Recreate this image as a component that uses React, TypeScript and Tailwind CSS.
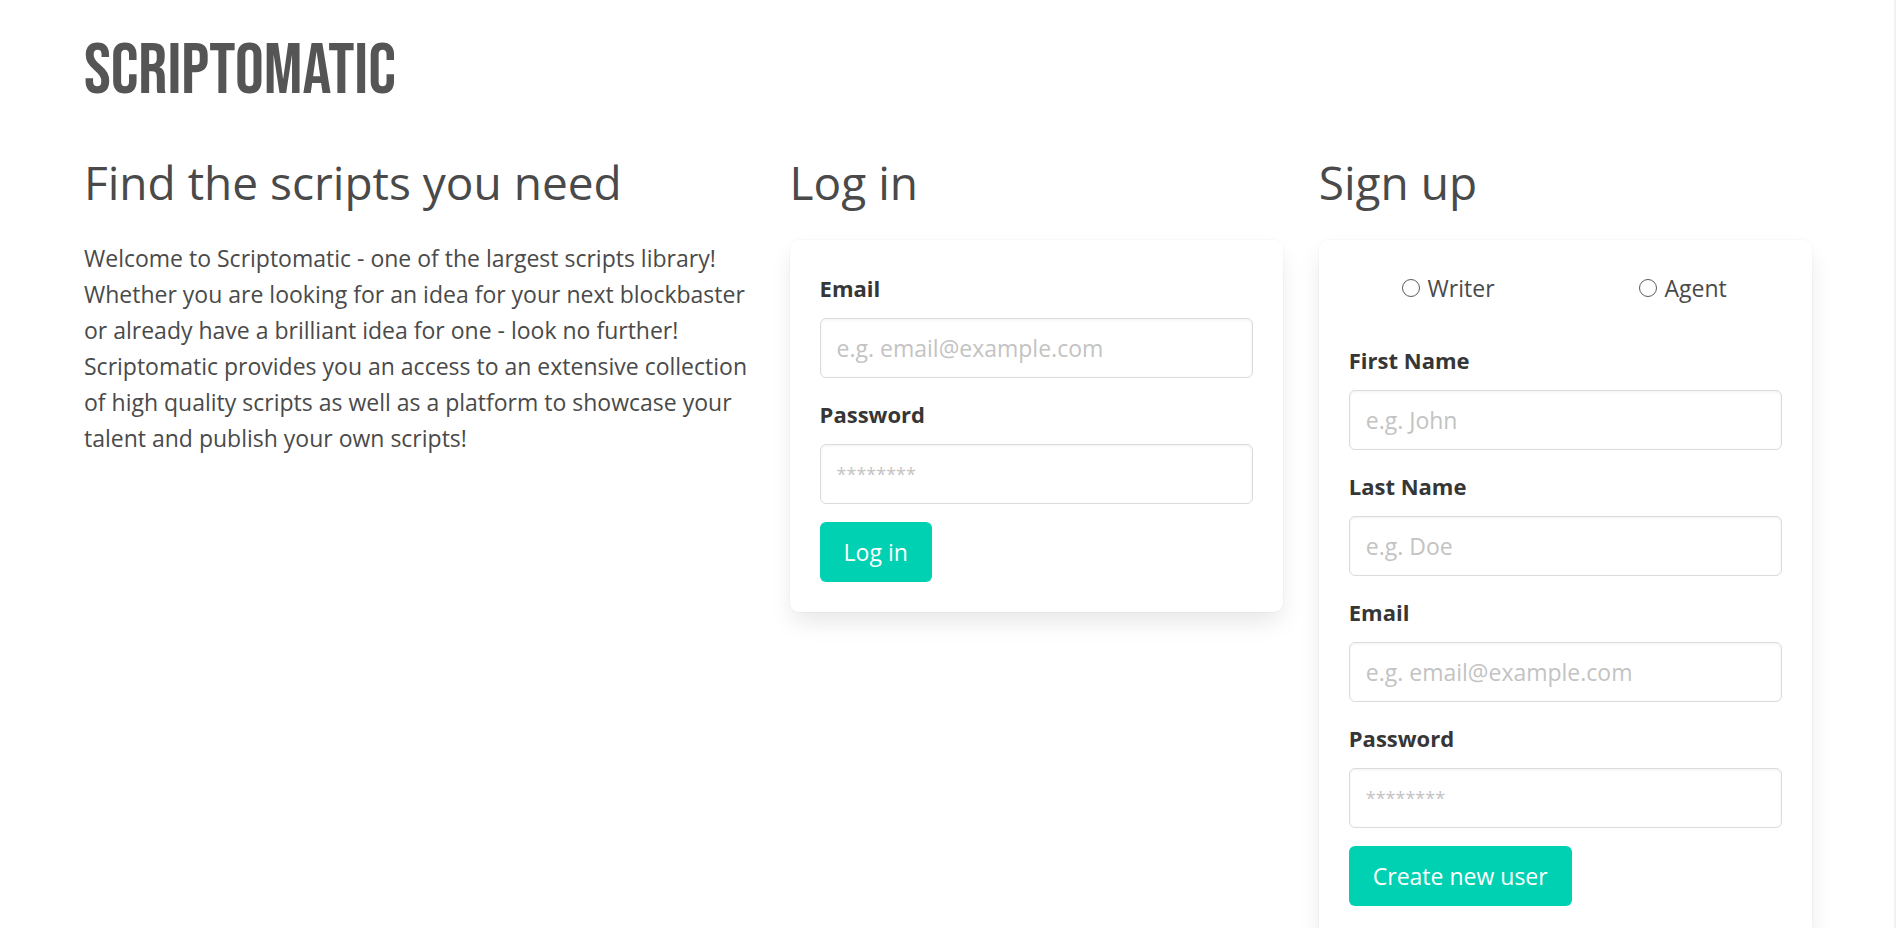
import { useId } from "react";
import type { ReactNode } from "react";

type FieldProps = {
  label: string;
  type: string;
  placeholder: string;
};

function Field({ label, type, placeholder }: FieldProps) {
  const id = useId();
  return (
    <div>
      <label
        htmlFor={id}
        className="mb-3 block text-[22px] leading-[36px] font-bold text-[#363636]"
      >
        {label}
      </label>
      <input
        id={id}
        type={type}
        placeholder={placeholder}
        className="block h-[60px] w-full rounded-md border border-[#dbdbdb] bg-white px-4 text-[23px] leading-[36px] text-[#363636] shadow-[inset_0_1px_3px_rgba(10,10,10,0.06)] outline-none placeholder:text-[#c3c3c3] focus:border-[#00d1b2] [&[type=password]]:text-[18px]"
      />
    </div>
  );
}

function Role({ value, label }: { value: string; label: string }) {
  return (
    <label className="flex cursor-pointer items-center justify-center gap-2">
      <input
        type="radio"
        name="role"
        value={value}
        className="size-[18px] appearance-none rounded-full border border-[#5c5c5c] bg-white checked:border-[5px] checked:border-[#0075ff]"
      />
      {label}
    </label>
  );
}

function SubmitButton({ children }: { children: ReactNode }) {
  return (
    <button
      type="submit"
      className="h-[60px] cursor-pointer self-start rounded-md bg-[#00d1b2] px-6 text-[23px] leading-[36px] text-white hover:bg-[#00c4a7]"
    >
      {children}
    </button>
  );
}

function Heading({ children }: { children: ReactNode }) {
  return (
    <h2 className="mb-[31px] text-[46px] leading-[54px] font-normal">{children}</h2>
  );
}

function Card({ children }: { children: ReactNode }) {
  return (
    <form
      onSubmit={(event) => event.preventDefault()}
      className="flex flex-col gap-[18px] rounded-[9px] bg-white p-[30px] shadow-[0_12px_24px_-3px_rgba(10,10,10,0.1),0_0_0_1px_rgba(10,10,10,0.02)]"
    >
      {children}
    </form>
  );
}

export default function App() {
  return (
    <div className="min-h-screen border-r-2 border-[#f1f1f1] bg-white pr-16 pl-[66px] font-['Segoe_UI','Open_Sans','Noto_Sans',sans-serif] text-[23px] leading-[36px] text-[#4a4a4a]">
      <header className="px-[18px] pt-9 pb-[47px]">
        <a
          href="#"
          className="font-['Bebas_Neue','Roboto_Condensed',sans-serif] block w-fit text-[72px] leading-[72px] text-[#555555]"
        >
          SCRIPTOMATIC
        </a>
      </header>
      <main className="flex items-start pb-9">
        <section className="w-2/5 px-[18px]">
          <Heading>Find the scripts you need</Heading>
          <p>
            Welcome to Scriptomatic - one of the largest scripts library! Whether you are
            looking for an idea for your next blockbaster or already have a brilliant idea
            for one - look no further! Scriptomatic provides you an access to an extensive
            collection of high quality scripts as well as a platform to showcase your talent
            and publish your own scripts!
          </p>
        </section>
        <section className="w-3/10 px-[18px]">
          <Heading>Log in</Heading>
          <Card>
            <Field label="Email" type="email" placeholder="e.g. email@example.com" />
            <Field label="Password" type="password" placeholder="********" />
            <SubmitButton>Log in</SubmitButton>
          </Card>
        </section>
        <section className="w-3/10 px-[18px]">
          <Heading>Sign up</Heading>
          <Card>
            <fieldset aria-label="Account type" className="-mx-[18px] mb-[18px] grid grid-cols-2">
              <Role value="writer" label="Writer" />
              <Role value="agent" label="Agent" />
            </fieldset>
            <Field label="First Name" type="text" placeholder="e.g. John" />
            <Field label="Last Name" type="text" placeholder="e.g. Doe" />
            <Field label="Email" type="email" placeholder="e.g. email@example.com" />
            <Field label="Password" type="password" placeholder="********" />
            <SubmitButton>Create new user</SubmitButton>
          </Card>
        </section>
      </main>
    </div>
  );
}
